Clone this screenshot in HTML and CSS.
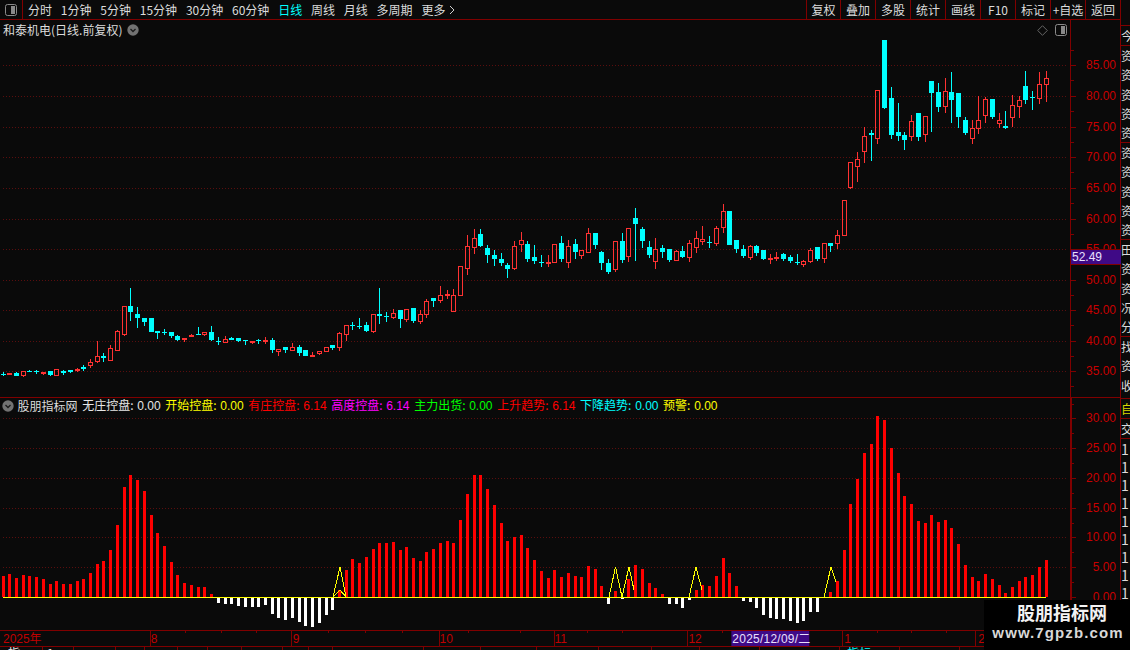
FILE: index.html
```html
<!DOCTYPE html>
<html lang="zh">
<head>
<meta charset="utf-8">
<title>和泰机电</title>
<link rel="stylesheet" href="styles.css">
</head>
<body>
<div class="app">
  <header class="topbar">
    <div class="icon-cell">
      <svg class="split-icon" viewBox="0 0 12 12"><rect x="0.5" y="0.5" width="11" height="11" rx="2" class="split-frame"/><rect x="6" y="2" width="4" height="8" class="split-fill"/></svg>
    </div>
    <nav class="periods">
      <span>分时</span><span>1分钟</span><span>5分钟</span><span>15分钟</span><span>30分钟</span><span>60分钟</span>
      <span class="active">日线</span><span>周线</span><span>月线</span><span>多周期</span><span class="more">更多 <svg class="more-arrow" viewBox="0 0 6 10"><path d="M1 1 L5 5 L1 9"/></svg></span>
    </nav>
    <nav class="tools">
      <span>复权</span><span>叠加</span><span>多股</span><span>统计</span><span>画线</span><span>F10</span><span>标记</span><span>+自选</span><span>返回</span>
    </nav>
  </header>
  <main class="workspace">
    <div class="panels">
      <section class="panel price-panel">
        <svg id="price" class="chart" viewBox="0 20 1121 377"></svg>
        <div class="chart-title">
          <span>和泰机电(日线.前复权)</span>
          <svg class="chev" viewBox="0 0 12 12"><circle cx="6" cy="6" r="5.7" class="chev-bg"/><path d="M3.5 5 L6 7.5 L8.5 5" class="chev-mark"/></svg>
        </div>
        <div class="chart-tools">
          <svg class="diamond" viewBox="0 0 11 11"><path d="M5.5 0.7 L10.3 5.5 L5.5 10.3 L0.7 5.5 Z"/></svg>
          <svg class="split-icon" viewBox="0 0 12 12"><rect x="0.5" y="0.5" width="11" height="11" rx="2" class="split-frame"/><rect x="6" y="2" width="4" height="8" class="split-fill"/></svg>
        </div>
        <div class="price-tag">52.49</div>
      </section>
      <section class="panel indicator-panel">
        <svg id="indicator" class="chart" viewBox="0 398 1121 232"></svg>
        <div class="legend">
          <svg class="chev" viewBox="0 0 12 12"><circle cx="6" cy="6" r="5.7" class="chev-bg"/><path d="M3.5 5 L6 7.5 L8.5 5" class="chev-mark"/></svg>
          <span class="legend-name">股朋指标网</span>
          <span class="lg white">无庄控盘: <b>0.00</b></span>
          <span class="lg yellow">开始控盘: <b>0.00</b></span>
          <span class="lg red">有庄控盘: <b>6.14</b></span>
          <span class="lg magenta">高度控盘: <b>6.14</b></span>
          <span class="lg green">主力出货: <b>0.00</b></span>
          <span class="lg red">上升趋势: <b>6.14</b></span>
          <span class="lg cyan">下降趋势: <b>0.00</b></span>
          <span class="lg yellow">预警: <b>0.00</b></span>
        </div>
      </section>
      <svg id="dates" class="date-axis" viewBox="0 630 1121 20"></svg>
    </div>
    <aside class="side">
      <div class="side-group"><span>今</span></div>
      <div class="side-group rows5"><span>资</span><span>资</span><span>资</span><span>资</span><span>资</span></div>
      <div class="side-group rows5"><span>资</span><span>资</span><span>资</span><span>资</span><span>资</span></div>
      <div class="side-group rows5"><span>田</span><span>资</span><span>资</span><span>况</span><span>分</span></div>
      <div class="side-group rows3"><span>找</span><span>资</span><span>收</span></div>
      <div class="side-group self"><span>自</span></div>
      <div class="side-group"><span>交</span></div>
      <div class="side-group nums"><span>1</span><span>1</span><span>1</span><span>1</span><span>1</span><span>1</span><span>1</span><span>1</span><span>1</span></div>
    </aside>
  </main>
  <div class="watermark">
    <div class="wm-title">股朋指标网</div>
    <div class="wm-url">www.7gpzb.com</div>
  </div>
</div>
<script src="app.js"></script>
</body>
</html>
```
FILE: styles.css
```css
* { box-sizing: border-box; }
html, body { margin: 0; padding: 0; background: #0a0a0a; }
body { font-family: "Noto Sans CJK SC", "Liberation Sans", sans-serif; color: #dcdcdc; }
.app { position: relative; width: 1130px; height: 650px; overflow: hidden; background: #0a0a0a; display: flex; flex-direction: column; }

.topbar { height: 20px; flex: none; display: flex; align-items: stretch; font-size: 12px; line-height: 19px; }
.icon-cell { width: 23px; height: 20px; border-right: 1px solid #800000; border-bottom: 1px solid #800000; display: flex; align-items: center; padding-left: 5px; }
.periods { flex: 1; display: flex; gap: 8.8px; padding-left: 5px; border-bottom: 1px solid #800000; white-space: nowrap; }
.periods .active { color: #00ffff; }
.more { display: flex; align-items: center; gap: 4px; }
.more-arrow { width: 6px; height: 10px; fill: none; stroke: #cfcfcf; stroke-width: 1; }
.tools { display: flex; width: 315px; margin-right: 9px; border-bottom: 1px solid #800000; border-right: 1px solid #800000; }
.tools span { width: 35px; border-left: 1px solid #800000; text-align: center; white-space: nowrap; }
.tools span:first-child { width: 34px; }

.split-icon { width: 12px; height: 12px; display: block; }
.split-frame { fill: none; stroke: #8a8a8a; stroke-width: 1; }
.split-fill { fill: #8a8a8a; }

.workspace { flex: 1; display: flex; min-height: 0; }
.panels { width: 1121px; flex: none; display: flex; flex-direction: column; border-right: 1px solid #800000; }
.panel { position: relative; flex: none; }
.price-panel { height: 378px; border-bottom: 1px solid #800000; }
.indicator-panel { height: 232px; }
.chart { display: block; width: 1121px; height: 100%; }
.price-panel .chart { height: 377px; }

.chart-title { position: absolute; left: 3px; top: 1px; display: flex; align-items: center; gap: 5px; font-size: 12px; line-height: 17px; }
.chev { width: 12px; height: 12px; display: block; flex: none; }
.chev-bg { fill: #727272; }
.chev-mark { fill: none; stroke: #1a1a1a; stroke-width: 1.3; }
.chart-tools { position: absolute; left: 1037px; top: 4px; display: flex; align-items: center; gap: 7px; }
.diamond { width: 11px; height: 11px; display: block; fill: none; stroke: #666; stroke-width: 1; }

.price-tag { position: absolute; left: 1071px; top: 229px; width: 50px; height: 16px; background: #3f0a86; border-top: 1px solid #800000; border-bottom: 1px solid #800000; color: #e8e0ff; font-family: "Liberation Sans", sans-serif; font-size: 12px; line-height: 14px; padding-left: 1px; }

.legend { position: absolute; left: 2px; top: 0; height: 15px; display: flex; align-items: center; gap: 4.6px; font-size: 12px; line-height: 15px; white-space: nowrap; }
.legend-name { margin-left: -1px; }
.lg b { font-weight: 400; font-family: "Liberation Sans", sans-serif; font-size: 12px; margin-left: 1px; }
.white { color: #e6e6e6; }
.yellow { color: #ffff00; }
.red { color: #ff0000; }
.magenta { color: #ff00ff; }
.green { color: #00ff00; }
.cyan { color: #00ffff; }

.date-axis { display: block; width: 1120px; height: 20px; flex: none; }

.side { width: 9px; flex: none; padding-top: 5px; overflow: hidden; font-size: 12px; color: #dcdcdc; }
.side-group { border-top: 1px solid #800000; height: 20px; display: flex; flex-direction: column; overflow: hidden; }
.side-group span { display: block; height: 19.3px; line-height: 19px; flex: none; }
.rows5 { height: 97px; }
.rows3 { height: 62px; }
.self { color: #d8d800; height: 20px; }
.nums { height: 165px; padding-top: 1px; }
.nums span { height: 18px; line-height: 18px; font-size: 14px; }

.watermark { position: absolute; right: 0; bottom: 0; width: 146px; height: 50px; background: #000; text-align: center; }
.wm-title { font-size: 18px; font-weight: 700; line-height: 24px; padding-left: 10px; color: #f2f2f2; }
.wm-url { font-family: "Liberation Sans", sans-serif; font-size: 15px; font-weight: 700; line-height: 18px; letter-spacing: 1.1px; padding-left: 2px; color: #d8d8d8; white-space: nowrap; }

/* svg content */
.grid { stroke: #5a0e0e; stroke-width: 1; stroke-dasharray: 1 2; shape-rendering: crispEdges; }
.axis { stroke: #800000; stroke-width: 1; shape-rendering: crispEdges; }
.axis-thick { stroke: #800000; stroke-width: 2; shape-rendering: crispEdges; }
.tick-label { fill: #c80000; font-family: "Liberation Sans", sans-serif; font-size: 12px; }
.up { fill: none; stroke: #ff3232; stroke-width: 1; shape-rendering: crispEdges; }
.up-wick { stroke: #ff3232; stroke-width: 1; shape-rendering: crispEdges; }
.down { fill: #00ffff; shape-rendering: crispEdges; }
.down-wick { stroke: #00ffff; stroke-width: 1; shape-rendering: crispEdges; }
.bar-up { fill: #ff0000; shape-rendering: crispEdges; }
.bar-down { fill: #ffffff; shape-rendering: crispEdges; }
.zero { stroke: #ffff00; stroke-width: 1; shape-rendering: crispEdges; }
.signal { fill: none; stroke: #ffff00; stroke-width: 1; shape-rendering: crispEdges; }
.date-label { fill: #c00000; font-family: "Liberation Sans", sans-serif; font-size: 12px; }
.date-year { fill: #c00000; font-family: "Liberation Sans", "Noto Sans CJK SC", sans-serif; font-size: 12px; }
.date-box { fill: #3f0a86; }
.date-text { fill: #e8e0ff; font-family: "Liberation Sans", "Noto Sans CJK SC", sans-serif; font-size: 12px; letter-spacing: 0.25px; }
.clip-text { fill: #e6e6e6; font-family: "Noto Sans CJK SC", sans-serif; font-size: 12px; }
.clip-cyan { fill: #00ffff; font-family: "Noto Sans CJK SC", sans-serif; font-size: 12px; }
```
FILE: app.js
```js
(function () {
  var NS = 'http://www.w3.org/2000/svg';
  function el(parent, tag, attrs, text) {
    var n = document.createElementNS(NS, tag);
    for (var k in attrs) n.setAttribute(k, attrs[k]);
    if (text !== undefined) n.textContent = text;
    parent.appendChild(n);
    return n;
  }
  function px(i) { return Math.floor(3 + i * 6.73); }
  function line(p, x1, y1, x2, y2, c) { return el(p, 'line', { x1: x1, y1: y1, x2: x2, y2: y2, 'class': c }); }

  // type, high, body top, body bottom, low  (pixel rows)
  var C = 'c', R = 'r';
  var candles = [
    [C,372,373.5,374.5,376],[R,373,373,375,375],[C,372,373,376,376],[R,371,371,376,377],[C,370,371,372,372],[C,370,371,372,374],[R,372,372,374,375],[C,371,371,375,376],[R,369,369,376,376],[C,370,371,373,375],
    [C,370,370,372,373],[R,368,369,371,372],[C,365,367,369,371],[R,359,362,366,368],[R,341,356,362,363],[C,353,356,358,362],[R,345,348,361,361],[R,330,331,351,351],[R,306,306,335,336],[C,288,306,312,321],
    [C,307,314,318,328],[C,318,318,322,326],[C,318,318,332,332],[C,331,331,333,339],[C,329,332,333,335],[C,332,332,336,338],[C,335,336,340,341],[R,338,338,340,342],[R,334,335,337,337],[C,327,334,335,335],
    [R,332,332,335,336],[C,326,332,340,341],[C,337,341,342,345],[R,336,339,343,343],[C,337,338,340,340],[C,338,338,341,342],[C,340,340,341,345],[R,341,341,343,344],[C,339,340,341,344],[R,337,340,342,344],
    [C,338,340,350,353],[R,349,349,352,356],[C,347,347,350,353],[R,343,347,351,351],[C,345,347,353,356],[C,350,350,356,356],[R,352,355,357,357],[R,351,351,354,355],[R,347,347,352,352],[C,345,345,348,350],
    [R,332,333,348,351],[R,325,325,335,341],[C,322,325,326,330],[C,318,326,327,329],[C,322,325,331,332],[R,314,314,332,333],[C,288,314,316,324],[C,312,316,317,322],[R,309,313,318,319],[C,310,310,319,328],
    [R,309,309,320,322],[C,308,308,321,323],[R,310,314,322,324],[R,299,301,315,318],[C,298,298,301,307],[R,286,295,301,303],[R,290,294,296,299],[R,289,295,312,312],[R,266,266,296,296],[R,235,246,269,275],
    [R,229,238,248,254],[C,229,234,246,247],[C,245,248,255,263],[C,250,255,259,266],[C,253,259,263,266],[C,263,265,269,278],[R,241,246,269,270],[R,232,240,245,252],[C,241,244,259,262],[C,245,257,261,264],
    [C,255,262,263,267],[R,255,262,264,267],[R,244,244,263,263],[C,236,243,259,262],[R,240,246,263,268],[C,239,244,252,259],[R,250,250,256,259],[R,228,233,253,253],[C,233,233,245,249],[C,251,252,263,270],
    [C,259,263,272,274],[R,241,241,270,272],[C,233,241,260,263],[R,228,228,257,262],[C,208,218,224,261],[C,227,229,241,248],[C,241,247,255,258],[R,238,249,262,269],[C,245,248,252,258],[C,249,249,260,262],
    [R,250,251,261,261],[C,246,251,257,258],[R,240,243,258,262],[R,231,238,248,253],[R,226,239,242,245],[C,236,242,243,248],[R,226,228,244,246],[R,204,211,228,233],[C,211,211,245,245],[C,240,240,249,253],
    [C,245,249,256,258],[R,245,246,258,260],[C,245,246,253,256],[C,250,250,259,260],[R,254,258,260,264],[R,252,257,259,261],[C,253,254,259,261],[C,255,257,261,263],[C,254,262,263,265],[R,260,261,265,267],
    [R,248,250,262,263],[C,247,247,259,261],[R,243,243,259,263],[C,243,243,246,252],[R,230,235,244,249],[R,200,200,236,236],[R,162,162,188,189],[R,152,159,167,182],[R,127,136,152,163],[C,130,133,135,161],
    [R,90,90,139,144],[C,40,40,108,109],[C,87,98,135,139],[C,103,132,136,141],[C,132,135,140,150],[R,115,121,137,141],[C,113,113,137,141],[R,116,116,135,142],[C,81,81,93,132],[C,83,92,107,112],
    [R,78,91,107,113],[C,72,92,100,123],[C,93,93,117,128],[C,117,120,133,135],[R,120,128,139,144],[R,96,120,129,134],[R,97,99,116,123],[C,99,99,117,119],[R,113,120,124,128],[C,111,126,128,129],
    [R,95,105,118,127],[R,96,100,107,118],[C,71,86,100,104],[C,91,97,98,110],[R,72,84,99,104],[R,71,78,85,102]
  ];

  var bars = [
    576,574,578,575,576,577,579,584,581,584,584,581,579,573,564,561,550,525,487,475,480,491,515,533,546,562,575,583,585,587,587,594,
    603,604,604,606,607,607,607,605,614,618,620,618,622,626,627,623,615,610,
    590,570,559,563,557,549,543,543,542,550,547,558,561,552,549,543,541,543,520,494,475,475,489,505,523,541,537,535,548,560,571,578,570,577,573,576,577,566,569,586,
    604,591,599,579,565,569,583,588,594,604,604,608,600,590,585,586,576,558,573,586,
    601,602,608,615,618,619,619,621,623,621,612,612,597,592,581,550,504,479,453,444,416,420,448,473,496,504,521,523,515,522,520,528,544,565,577,581,574,579,585,593,587,581,577,575,567,560
  ];

  var price = document.getElementById('price');
  var priceGrid = [[65,'85.00'],[96,'80.00'],[127,'75.00'],[157,'70.00'],[188,'65.00'],[219,'60.00'],[249,'55.00'],[280,'50.00'],[310,'45.00'],[341,'40.00'],[371,'35.00']];
  priceGrid.forEach(function (g) {
    line(price, 3, g[0] + 0.5, 1068, g[0] + 0.5, 'grid');
    line(price, 1071, g[0] + 0.5, 1076, g[0] + 0.5, 'axis');
    line(price, 1071, g[0] + 15.5, 1074, g[0] + 15.5, 'axis');
    el(price, 'text', { x: 1086, y: g[0] + 4, 'class': 'tick-label' }, g[1]);
  });
  line(price, 1071, 50.5, 1074, 50.5, 'axis');
  line(price, 1070.5, 20, 1070.5, 397, 'axis');

  candles.forEach(function (c, i) {
    var x = px(i), up = c[0] === R;
    var cx = x + 0.5, cls = up ? 'up-wick' : 'down-wick';
    if (c[1] < c[2]) line(price, cx, c[1], cx, c[2], cls);
    if (c[4] > c[3]) line(price, cx, c[3], cx, c[4], cls);
    if (up) {
      el(price, 'rect', { x: x - 1.5, y: Math.round(c[2]) + 0.5, width: 4, height: Math.max(1, Math.round(c[3] - c[2]) - 1), 'class': 'up' });
    } else {
      el(price, 'rect', { x: x - 2, y: Math.round(c[2]), width: 5, height: Math.max(1, Math.round(c[3] - c[2])), 'class': 'down' });
    }
  });

  var ind = document.getElementById('indicator');
  var indGrid = [[418,'30.00'],[448,'25.00'],[478,'20.00'],[508,'15.00'],[537,'10.00'],[567,'5.00'],[597,'0.00']];
  indGrid.forEach(function (g) {
    if (g[0] !== 597) {
      line(ind, 3, g[0] + 0.5, 1068, g[0] + 0.5, 'grid');
      line(ind, 1071, g[0] + 15.5, 1074, g[0] + 15.5, 'axis');
    }
    line(ind, 1071, g[0] + 0.5, 1076, g[0] + 0.5, 'axis');
    el(ind, 'text', { x: 1116, y: g[0] + 4, 'text-anchor': 'end', 'class': 'tick-label' }, g[1]);
  });
  line(ind, 1071, 612.5, 1074, 612.5, 'axis');
  line(ind, 1071, 404.5, 1074, 404.5, 'axis');
  line(ind, 1071, 398, 1071, 630, 'axis-thick');

  bars.forEach(function (b, i) {
    var x = px(i) - 1;
    if (b < 597) el(ind, 'rect', { x: x, y: b, width: 3, height: 597 - b, 'class': 'bar-up' });
    else if (b > 598) el(ind, 'rect', { x: x, y: 598, width: 3, height: b - 598, 'class': 'bar-down' });
  });
  line(ind, 3, 597.5, 1046, 597.5, 'zero');
  [
    '333,597 340,567 346,597',
    '333,597 340,590 346,597',
    '609,597 615.5,567 622,597',
    '622,597 629,567 634,590',
    '689,597 696,567 702,590',
    '824,597 831,567 836,582'
  ].forEach(function (p) { el(ind, 'polyline', { points: p, 'class': 'signal' }); });

  var dates = document.getElementById('dates');
  line(dates, 0, 630.5, 1120, 630.5, 'axis');
  line(dates, 0, 646.5, 1120, 646.5, 'axis');
  [150, 291, 439, 554, 688, 843, 976].forEach(function (x) { line(dates, x + 0.5, 630, x + 0.5, 646, 'axis'); });
  [185, 221, 256, 328, 365, 402, 468, 520, 588, 623, 723, 878, 912, 947, 1012, 1046].forEach(function (x) { line(dates, x + 0.5, 630, x + 0.5, 633, 'axis'); });
  [42, 73, 115, 144, 177, 207, 241, 282, 308, 332, 423, 480, 536, 599, 652, 700, 760, 840, 900, 960, 1040].forEach(function (x) { line(dates, x + 0.5, 647, x + 0.5, 650, 'axis'); });
  el(dates, 'text', { x: 3, y: 643, 'class': 'date-year' }, '2025年');
  [[151, '8'], [293, '9'], [440, '10'], [555, '11'], [689, '12'], [845, '1'], [979, '2']].forEach(function (d) {
    el(dates, 'text', { x: d[0], y: 643, 'class': 'date-label' }, d[1]);
  });
  el(dates, 'rect', { x: 732, y: 631, width: 78, height: 15, 'class': 'date-box' });
  el(dates, 'text', { x: 733, y: 643, 'class': 'date-text' }, '2025/12/09/二');
  el(dates, 'text', { x: 8, y: 658.5, 'class': 'clip-text' }, '指');
  el(dates, 'text', { x: 47, y: 658.5, 'class': 'clip-text' }, '1');
  el(dates, 'text', { x: 848, y: 658.5, 'class': 'clip-cyan' }, '指标');
})();
```
